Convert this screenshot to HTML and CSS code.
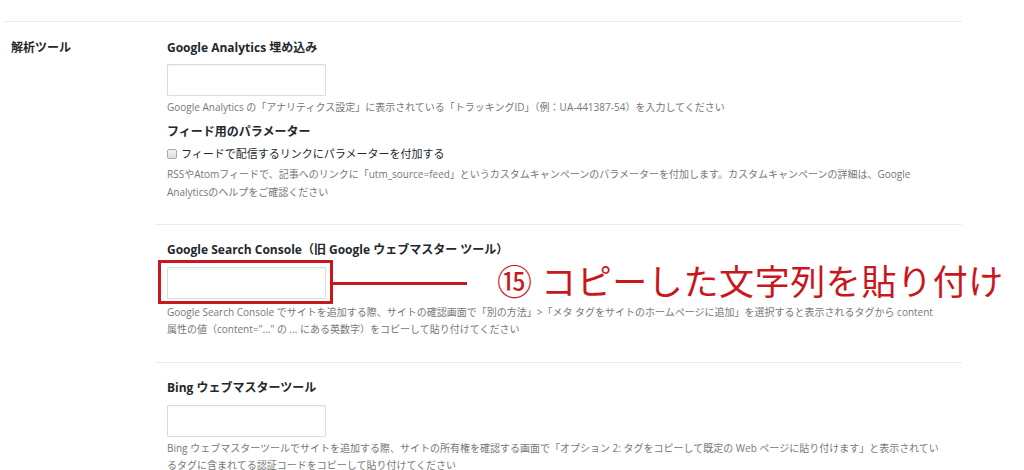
FILE: index.html
```html
<!DOCTYPE html>
<html>
<head>
	<meta http-equiv="Content-Type" content="text/html;charset=UTF-8">
	<title>解析ツール</title>
	<link rel="stylesheet" href="styles.css">
</head>
<body>
	<div class="settings">
		<div class="row">
			<div class="row-label">解析ツール</div>
			<div class="row-fields">

				<div class="field">
					<h3 class="field-title">Google Analytics 埋め込み</h3>
					<input class="text-input" type="text">
					<p class="desc">Google Analytics の「アナリティクス設定」に表示されている「トラッキングID」（例：UA-441387-54）を入力してください</p>
					<h4 class="sub-title">フィード用のパラメーター</h4>
					<label class="check"><span class="check-box"></span>フィードで配信するリンクにパラメーターを付加する</label>
					<p class="desc desc-wide">RSSやAtomフィードで、記事へのリンクに「utm_source=feed」というカスタムキャンペーンのパラメーターを付加します。カスタムキャンペーンの詳細は、Google Analyticsのヘルプをご確認ください</p>
				</div>

				<div class="field field-mid">
					<h3 class="field-title">Google Search Console（旧 Google ウェブマスター ツール）</h3>
					<div class="input-wrap">
						<input class="text-input" type="text">
						<!-- 注釈 -->
						<div class="mark-box"></div>
						<div class="mark-line"></div>
						<div class="mark-text">⑮ コピーした文字列を貼り付け</div>
					</div>
					<p class="desc desc-gap">Google Search Console でサイトを追加する際、サイトの確認画面で「別の方法」&gt;「メタ タグをサイトのホームページに追加」を選択すると表示されるタグから content 属性の値（content="..." の ... にある英数字）をコピーして貼り付けてください</p>
				</div>

				<div class="field field-last">
					<h3 class="field-title">Bing ウェブマスターツール</h3>
					<input class="text-input" type="text">
					<p class="desc">Bing ウェブマスターツールでサイトを追加する際、サイトの所有権を確認する画面で「オプション 2: タグをコピーして既定の Web ページに貼り付けます」と表示されているタグに含まれてる認証コードをコピーして貼り付けてください</p>
				</div>

			</div>
		</div>
	</div>
</body>
</html>
```

FILE: styles.css
```css
*{
	margin: 0;
	padding: 0;
	box-sizing: border-box;
}
body{
	background-color: #fff;
	color: #23282d;
	font-family: "Open Sans", "Noto Sans CJK JP", sans-serif;
	font-size: 11px;
	overflow: hidden;
}
.settings{
	width: 958px;
	margin-left: 4px;
	margin-top: 21px;
	border-top: 1px solid #ececec;
}
.row{
	display: flex;
}
.row-label{
	width: 151px;
	padding: 17px 0 0 7px;
	font-size: 12px;
	line-height: 18px;
	font-weight: 600;
	color: #23282d;
}
.row-fields{
	flex: 1;
}
.field{
	padding: 17px 20px 23px 12px;
}
.field-mid{
	padding-top: 16px;
	padding-bottom: 24px;
}
.field-last{
	padding-top: 16px;
	padding-bottom: 0;
}
.field + .field{
	border-top: 1px solid #ececec;
}
.field-title{
	font-size: 12px;
	line-height: 18px;
	font-weight: 700;
	color: #23282d;
	margin-bottom: 8px;
}
.field:first-child .field-title{
	margin-bottom: 7px;
}
.text-input{
	display: block;
	width: 159px;
	height: 32px;
	border: 1px solid #dcdcdc;
	border-radius: 1px;
	box-shadow: inset 0 1px 2px rgba(0,0,0,.05);
	background-color: #fff;
	outline: none;
}
.desc{
	margin-top: 3px;
	font-size: 10px;
	line-height: 17px;
	color: #777;
}
.desc-gap{
	margin-top: 5px;
}
.desc-wide{
	line-height: 18px;
	margin-top: 2px;
}
.sub-title{
	margin-top: 7px;
	font-size: 12px;
	line-height: 18px;
	font-weight: 700;
	color: #23282d;
}
.check{
	display: flex;
	align-items: center;
	margin-top: 4px;
	font-size: 11px;
	line-height: 18px;
	color: #23282d;
}
.check-box{
	width: 10px;
	height: 10px;
	margin-right: 4px;
	border: 1px solid #a9a9a9;
	border-radius: 2px;
	background: linear-gradient(#f4f4f4, #dedede);
}

/* 注釈 */
.input-wrap{
	position: relative;
}
.mark-box{
	position: absolute;
	left: -9px;
	top: -7px;
	width: 175px;
	height: 44px;
	border: 3px solid #c9171e;
}
.mark-line{
	position: absolute;
	left: 166px;
	top: 15px;
	width: 134px;
	height: 3px;
	background-color: #c9171e;
}
.mark-text{
	position: absolute;
	left: 330px;
	top: -7px;
	white-space: nowrap;
	font-family: "Noto Sans CJK JP", sans-serif;
	font-size: 35px;
	line-height: 40px;
	font-weight: 400;
	letter-spacing: 0.6px;
	color: #c9171e;
}
```
